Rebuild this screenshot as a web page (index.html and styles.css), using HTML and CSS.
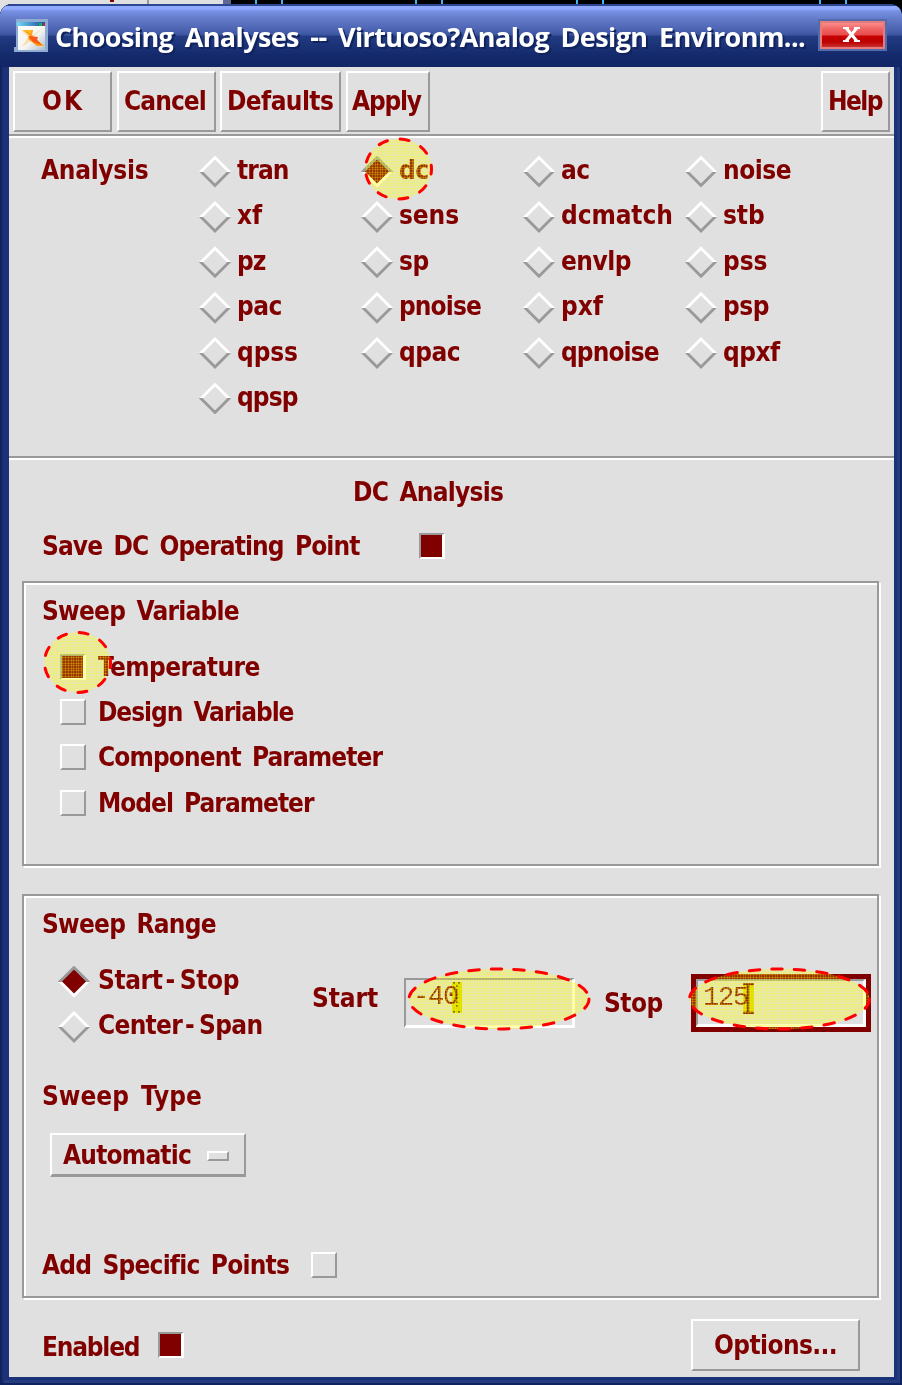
FILE: index.html
```html
<!DOCTYPE html>
<html lang="en">
<head>
<meta charset="utf-8">
<title>Choosing Analyses</title>
<link rel="stylesheet" href="styles.css">
</head>
<body>
<div class="desk"><i class="desk-red"></i><i class="desk-gray"></i><i class="desk-edge"></i><i class="desk-dark"></i></div>
<main class="window">
  <header class="titlebar">
    <svg class="app-icon" width="35" height="35" viewBox="0 0 35 35">
      <defs><linearGradient id="paper" x1="0" y1="0" x2="1" y2="1"><stop offset="0" stop-color="#fff"/><stop offset=".6" stop-color="#f3f3ef"/><stop offset="1" stop-color="#a9bdd2"/></linearGradient>
      <linearGradient id="bar"><stop offset="0" stop-color="#74d8f4"/><stop offset="1" stop-color="#164a9c"/></linearGradient></defs>
      <path d="M3 0H35V33H1V28H3Z" fill="#8facd4"/>
      <path d="M5 3H32V31H5Z" fill="url(#paper)"/><path d="M4 3H32V7H4Z" fill="url(#bar)"/>
      <path d="M26 4h3v3h-3z" fill="#12b45a"/><path d="M30 4h2v3h-2z" fill="#c51f45"/>
      <path d="M30 9L21 17L31 27L27 28L19 21L9 28L15 18L8 11L14 12L20 16Z" fill="#f8dfae"/>
      <path d="M10 11H20L19 16L31 27L24 27L15 20L17 17Z" fill="#ff9a14"/>
      <path d="M10 11H19L18 15Z" fill="#ffb820"/>
      <path d="M15 17L25 18L24 21L29 26L20 23Z" fill="#f9581c"/>
    </svg>
    <h1 class="title">Choosing Analyses -- Virtuoso?Analog Design Environm...</h1>
    <div class="close"><svg width="17" height="15" viewBox="0 0 17 15"><path d="M0 0H6V2L8.500 5L11 2V0H17V2H15L10.500 7.500L15 13H17V15H11V13L8.500 10L6 13V15H0V13H2L6.500 7.500L2 2H0Z" fill="#fff"/></svg></div>
  </header>
  <div class="client">
    <nav class="toolbar">
      <div class="btn b-ok">OK</div><div class="btn b-cancel">Cancel</div><div class="btn b-defaults">Defaults</div><div class="btn b-apply">Apply</div><div class="btn b-help">Help</div>
    </nav>
    <section class="analysis">
      <div class="analysis-label">Analysis</div>
      <div class="choices">
        <div class="radio"><i class="dia"></i><span class="tight">tran</span></div>
        <div class="radio"><i class="dia on"></i><span>dc</span></div>
        <div class="radio"><i class="dia"></i><span>ac</span></div>
        <div class="radio"><i class="dia"></i><span>noise</span></div>
        <div class="radio"><i class="dia"></i><span class="loose">xf</span></div>
        <div class="radio"><i class="dia"></i><span class="loose">sens</span></div>
        <div class="radio"><i class="dia"></i><span class="loose">dcmatch</span></div>
        <div class="radio"><i class="dia"></i><span class="loose">stb</span></div>
        <div class="radio"><i class="dia"></i><span class="tight">pz</span></div>
        <div class="radio"><i class="dia"></i><span>sp</span></div>
        <div class="radio"><i class="dia"></i><span>envlp</span></div>
        <div class="radio"><i class="dia"></i><span class="loose">pss</span></div>
        <div class="radio"><i class="dia"></i><span>pac</span></div>
        <div class="radio"><i class="dia"></i><span class="tight">pnoise</span></div>
        <div class="radio"><i class="dia"></i><span class="loose">pxf</span></div>
        <div class="radio"><i class="dia"></i><span>psp</span></div>
        <div class="radio"><i class="dia"></i><span class="loose">qpss</span></div>
        <div class="radio"><i class="dia"></i><span>qpac</span></div>
        <div class="radio"><i class="dia"></i><span class="tight">qpnoise</span></div>
        <div class="radio"><i class="dia"></i><span>qpxf</span></div>
        <div class="radio"><i class="dia"></i><span class="tight">qpsp</span></div>
      </div>
    </section>
    <h2 class="heading">DC Analysis</h2>
    <div class="save"><span>Save DC Operating Point</span><i class="box on"></i></div>
    <section class="group variable">
      <h3 class="t-variable">Sweep Variable</h3>
      <div class="check"><i class="box on"></i><span class="t-temp">Temperature</span></div>
      <div class="check"><i class="box"></i><span class="t-design">Design Variable</span></div>
      <div class="check"><i class="box"></i><span class="t-comp">Component Parameter</span></div>
      <div class="check"><i class="box"></i><span class="t-model">Model Parameter</span></div>
    </section>
    <section class="group range">
      <h3 class="t-range">Sweep Range</h3>
      <div class="limits">
        <div class="modes">
          <div class="radio"><i class="dia on"></i><span class="t-ss">Start<span class="dash">-</span>Stop</span></div>
          <div class="radio"><i class="dia"></i><span class="t-cs">Center<span class="dash">-</span>Span</span></div>
        </div>
        <span class="l-start">Start</span>
        <div class="field start"><span>-40</span><svg class="caret" width="10" height="31" viewBox="0 0 10 31"><path d="M0 0h10v31H0z" fill="#f0f000"/><path d="M1 1H4M6 1H9M5 3V27M1 30H4M6 30H9" stroke="#7e6000" stroke-width="2" stroke-dasharray="2"/></svg></div>
        <span class="l-stop">Stop</span>
        <div class="field stop"><span>125</span><svg class="caret" width="11" height="31" viewBox="0 0 11 31"><path d="M0 0h11v31H0z" fill="#f0f000"/><path d="M0 1H11M5 1V30M0 30H11" stroke="#800000" stroke-width="2.500"/></svg></div>
      </div>
      <h3 class="t-type">Sweep Type</h3>
      <div class="menu"><span>Automatic</span><i></i></div>
      <div class="points"><span>Add Specific Points</span><i class="box"></i></div>
    </section>
    <footer class="bottom"><span class="t-enabled">Enabled</span><i class="box on"></i><div class="btn options">Options...</div></footer>
  </div>
</main>
<svg class="marks" width="902" height="1385" viewBox="0 0 902 1385">
  <defs><pattern id="mesh" width="16" height="16" patternUnits="userSpaceOnUse">
    <path d="M0 0H16V16H0Z" fill="#ff0" fill-opacity=".2"/>
    <path d="M1.500 0V16M4.500 0V16M7.500 0V16M9.500 0V16M12.500 0V16M14.500 0V16M0 1.500H16M0 4.500H16M0 7.500H16M0 9.500H16M0 12.500H16M0 14.500H16" stroke="#ff0" stroke-opacity=".24"/>
  </pattern></defs>
  <g fill="url(#mesh)" stroke="#f00" stroke-width="3" stroke-linecap="round">
    <ellipse cx="398.500" cy="169" rx="33" ry="30" stroke-dasharray="9 13" stroke-dashoffset="4"/>
    <ellipse cx="77.500" cy="662.500" rx="33" ry="30" stroke-dasharray="9 13" stroke-dashoffset="4"/>
    <ellipse cx="499" cy="999" rx="90" ry="30" stroke-dasharray="10.500 12"/>
    <ellipse cx="779.500" cy="999" rx="90" ry="30" stroke-dasharray="10.500 12"/>
  </g>
</svg>
</body>
</html>
```

FILE: styles.css
```css
* { box-sizing: border-box; }
html, body { margin: 0; width: 902px; height: 1385px; overflow: hidden; }
body { position: relative; background: #000; color: #800000; font: bold 26px/30px "DejaVu Sans Condensed", "DejaVu Sans", sans-serif; font-stretch: condensed; letter-spacing: -.5px; word-spacing: 4px; }
h1, h2, h3 { margin: 0; font-size: inherit; font-weight: bold; }
i { display: block; flex: none; }
span { white-space: nowrap; }
.tight { letter-spacing: -.9px; }
.loose { letter-spacing: -.1px; }
.desk { display: flex; height: 20px; margin-bottom: -16px; background: #e0e0e0; }
.desk-red { width: 4px; height: 2px; margin-left: 110px; background: #800000; }
.desk-gray { width: 2px; margin-left: 33px; background: #999; }
.desk-edge { width: 8px; margin-left: 74px; background: #5f6797; }
.desk-dark { width: 671px; background: linear-gradient(90deg, #40b4f4 2px, transparent 2px) 24px 0/26px 20px no-repeat, linear-gradient(90deg, #40b4f4 2px, transparent 2px) 50px 0/100px 20px no-repeat, linear-gradient(90deg, #40b4f4 2px, transparent 2px) 184px 0/26px 20px no-repeat, linear-gradient(90deg, #40b4f4 2px, transparent 2px) 210px 0/100px 20px no-repeat, linear-gradient(90deg, #40b4f4 2px, transparent 2px) 345px 0/26px 20px no-repeat, linear-gradient(90deg, #40b4f4 2px, transparent 2px) 371px 0/100px 20px no-repeat, linear-gradient(90deg, #40b4f4 2px, transparent 2px) 588px 0/26px 20px no-repeat, linear-gradient(90deg, #40b4f4 2px, transparent 2px) 614px 0/50px 20px no-repeat, #000; }
.window { position: relative; height: 1381px; padding: 0 8px 8px 9px; border-radius: 12px 12px 0 0; background: #1b3178; box-shadow: inset 2px 0 #10235e, inset -2px 0 #10235e, inset 0 -2px #10235e, inset 4px 0 #1a3070, inset -5px 0 #253d80, inset 0 -5px #253d80; }
.titlebar { display: flex; height: 63px; margin: 0 -8px 0 -9px; padding-left: 13px; border-radius: 12px 12px 0 0; background: linear-gradient(#2e4890 0 2px, #91a9ff 2px 5px, #7891e4 7px, #6078c5 16px, #4860ae 27px, #3c559f 31px, #223b82 32px, #13296b 52px, #122666 63px); }
.app-icon { margin-top: 15px; flex: none; }
.title { width: 763px; margin: 18px 0 0 7px; white-space: nowrap; color: #fff; font: bold 27px/30px "Open Sans", sans-serif; letter-spacing: -.6px; word-spacing: 5px; text-shadow: 2px 2px #10235c; }
.close { display: flex; width: 69px; height: 32px; margin-top: 15px; padding: 6px 0 0 23px; border: 2px solid #516bab; box-shadow: inset 0 0 0 2px #e77a7a; background: linear-gradient(#ff9c9c 0, #f16363 8px, #e84c4c 14px, #c70000 15px, #bd0000 21px, #c44 28px); }
.client { height: 1310px; background: #e0e0e0; overflow: hidden; }
.toolbar { display: flex; height: 71px; padding: 4px 4px 0; border-bottom: 2px solid #fff; box-shadow: inset 0 -2px #999; }
.btn { height: 61px; border: 2px solid; border-color: #fff #999 #999 #fff; padding-top: 13px; white-space: nowrap; }
.b-ok { width: 99px; padding-left: 27px; letter-spacing: 2px; }
.b-cancel { width: 99px; margin-left: 5px; padding-left: 5px; letter-spacing: -.9px; }
.b-defaults { width: 121px; margin-left: 4px; padding-left: 5px; letter-spacing: -.6px; }
.b-apply { width: 84px; margin-left: 5px; padding-left: 4px; letter-spacing: -1.2px; }
.b-help { width: 69px; margin-left: auto; padding-left: 5px; letter-spacing: -1.6px; }
.analysis { display: flex; height: 322px; padding-top: 10px; border-bottom: 2px solid #fff; box-shadow: inset 0 -2px #999; }
.analysis-label { width: 190px; padding: 7px 0 0 32px; letter-spacing: -.3px; }
.choices { display: grid; grid-template-columns: repeat(4, 162px); grid-auto-rows: 45.4px; }
.radio { display: flex; height: 45.4px; padding-top: 7px; }
.dia { position: relative; width: 32px; height: 32px; margin: .5px 6px 0 0; clip-path: polygon(50% 0, 100% 50%, 50% 100%, 0 50%); background: linear-gradient(#fff 50%, #999 50%); }
.dia::after { content: ""; position: absolute; inset: 4px; background: #e0e0e0; clip-path: inherit; }
.dia.on { background: linear-gradient(#999 50%, #fff 50%); }
.dia.on::after { background: #800000; }
.heading { margin: 17px 0 0 344px; letter-spacing: -.75px; }
.save { display: flex; height: 74px; padding: 24px 0 0 33px; }
.save span { width: 377px; letter-spacing: -.9px; }
.box { width: 26px; height: 26px; border: 2px solid; border-color: #fff #999 #999 #fff; }
.box.on { background: #800000; border-color: #999 #fff #fff #999; border-width: 2px 3px 2px 2px; }
.save .box { margin-top: 2px; }
.group { margin-left: 13px; width: 857px; border: 2px solid #999; box-shadow: inset 2px 2px #fff, 2px 2px #fff; }
.variable { height: 285px; padding: 13px 0 0 18px; }
.variable h3 { height: 55.500px; }
.t-variable { letter-spacing: -.75px; }
.t-temp { letter-spacing: -.55px; }
.t-design { letter-spacing: -1.05px; }
.t-comp { letter-spacing: -.9px; }
.t-model { letter-spacing: -1px; }
.check { display: flex; height: 45.4px; padding-left: 18px; gap: 12px; }
.check .box { margin-top: 2px; }
.range { height: 404px; margin-top: 28px; padding: 13px 0 0 18px; }
.range h3 { height: 30px; }
.t-range { letter-spacing: -.75px; }
.limits { display: flex; height: 120px; padding: 19px 0 0 16px; }
.modes { width: 254px; }
.modes .dia { margin-right: 8px; }
.t-ss { letter-spacing: -.4px; }
.t-cs { letter-spacing: -.7px; }
.dash { margin: 0 5px 0 3px; }
.l-start { width: 92px; padding-top: 25px; letter-spacing: -.1px; }
.l-stop { width: 87px; padding-top: 30px; }
.field { display: flex; font: 27px/34px "Liberation Mono", monospace; letter-spacing: -1.2px; word-spacing: 0; border: 3px solid; border-color: #999 #fff #fff #999; border-width: 2px 3px 3px 2px; }
.start { width: 171px; height: 50px; margin: 20px 29px 0 0; padding-left: 7px; }
.start span { width: 39px; }
.stop { width: 180px; height: 58px; margin-top: 16px; outline: 5px solid #800000; outline-offset: -5px; border-width: 7px 8px 8px 7px; padding-left: 5px; }
.stop span { width: 40px; }
.caret { margin-top: 1.500px; mix-blend-mode: multiply; }
.t-type { margin-top: 22px; letter-spacing: 0; }
.menu { display: flex; width: 196px; height: 44px; margin: 22px 0 0 8px; padding: 5px 0 0 11px; border: 2px solid; border-color: #fff #999 #999 #fff; border-bottom-width: 3px; }
.menu span { width: 144px; letter-spacing: -.8px; }
.menu i { width: 22px; height: 10px; margin-top: 11px; border: 2px solid; border-color: #fff #999 #999 #fff; }
.points { display: flex; margin-top: 73px; }
.points span { width: 269px; letter-spacing: -.8px; }
.points .box { margin-top: 2px; }
.bottom { display: flex; height: 79px; padding: 34px 0 0 33px; }
.t-enabled { width: 116px; letter-spacing: -1.2px; }
.options { width: 169px; height: 52px; margin: -13px 0 0 507px; padding: 9px 0 0 21px; letter-spacing: -.6px; }
.marks { position: absolute; left: 0; top: 0; }
```
